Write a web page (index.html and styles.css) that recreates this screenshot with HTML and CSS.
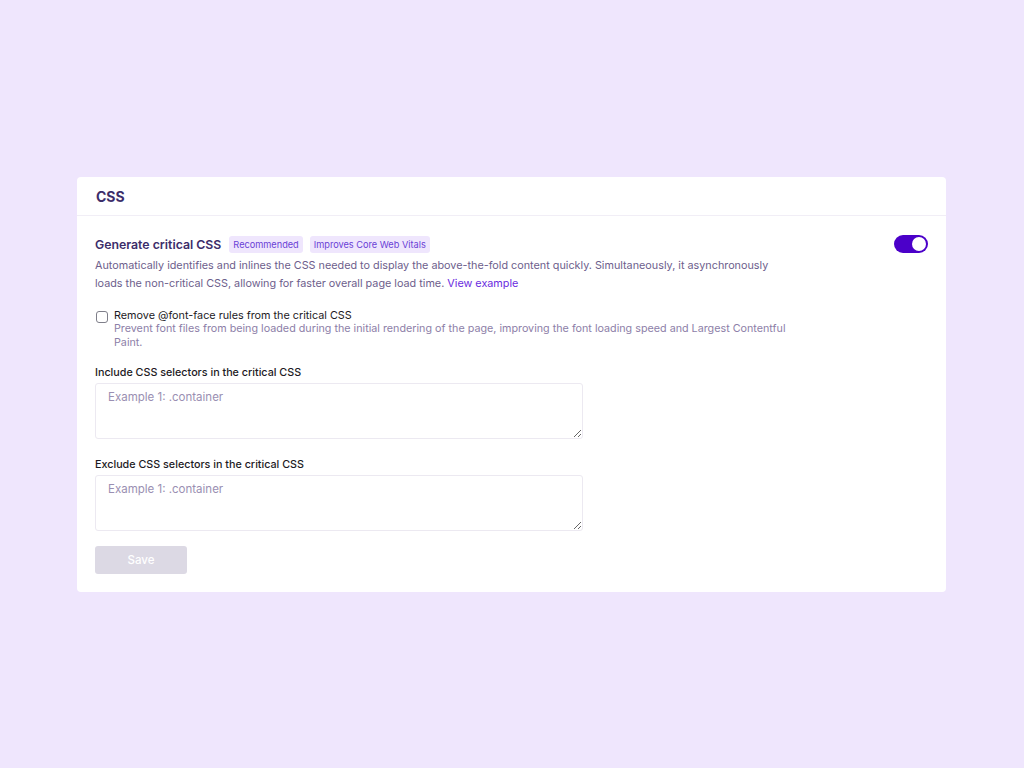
FILE: index.html
```html
<!DOCTYPE html>
<html lang="en">
<head>
<meta charset="utf-8">
<title>CSS settings</title>
<link rel="stylesheet" href="styles.css">
</head>
<body>
<div class="page">
  <section class="card">
    <header class="card-head">
      <h2 class="card-title">CSS</h2>
    </header>
    <div class="card-body">
      <div class="setting">
        <div class="setting-text">
          <div class="setting-title-row">
            <h3 class="setting-title">Generate critical CSS</h3>
            <span class="badge">Recommended</span>
            <span class="badge">Improves Core Web Vitals</span>
          </div>
          <p class="setting-desc">Automatically identifies and inlines the CSS needed to display the above-the-fold content quickly. Simultaneously, it asynchronously loads the non-critical CSS, allowing for faster overall page load time. <a class="link" href="#">View example</a></p>
        </div>
        <label class="toggle"><span class="knob"></span></label>
      </div>

      <div class="check-row">
        <span class="checkbox"></span>
        <div class="check-text">
          <div class="check-label">Remove @font-face rules from the critical CSS</div>
          <div class="check-desc">Prevent font files from being loaded during the initial rendering of the page, improving the font loading speed and Largest Contentful Paint.</div>
        </div>
      </div>

      <div class="field">
        <div class="field-label">Include CSS selectors in the critical CSS</div>
        <textarea class="textarea" placeholder="Example 1: .container"></textarea>
      </div>

      <div class="field">
        <div class="field-label">Exclude CSS selectors in the critical CSS</div>
        <textarea class="textarea" placeholder="Example 1: .container"></textarea>
      </div>

      <button class="save" type="button">Save</button>
    </div>
  </section>
</div>
</body>
</html>
```
FILE: styles.css
```css
* { box-sizing: border-box; }
html, body { margin: 0; padding: 0; }
body {
  background: #efe6fd;
  font-family: Inter, "Liberation Sans", sans-serif;
  width: 1024px;
  height: 768px;
}
.page {
  height: 768px;
  display: flex;
  align-items: flex-start;
  justify-content: center;
  padding: 177px 1px 0 0;
}
.card {
  width: 869px;
  background: #ffffff;
  border-radius: 4px;
}
.card-head {
  height: 39px;
  border-bottom: 1px solid #f1eef6;
  padding: 0 19px;
  display: flex;
  align-items: center;
}
.card-title {
  margin: 0;
  font-size: 14px;
  font-weight: 700;
  color: #3c2d6a;
}
.card-body {
  padding: 19px 18px 18px 18px;
}
.setting {
  display: flex;
  justify-content: space-between;
  align-items: flex-start;
}
.setting-text { max-width: 700px; }
.setting-title-row {
  display: flex;
  align-items: center;
  gap: 7px;
  height: 18px;
}
.setting-title {
  margin: 0 1px 0 0;
  font-size: 12.3px;
  font-weight: 600;
  color: #3c2d6a;
}
.badge {
  font-size: 9.2px;
  color: #6a3fd6;
  background: #efe6fd;
  border-radius: 3px;
  padding: 3px 4px;
  line-height: 11px;
}
.setting-desc {
  margin: 4px 0 0;
  font-size: 10.8px;
  line-height: 18px;
  color: #6d5e8c;
}
.link { color: #6a2be0; text-decoration: none; }
.toggle {
  flex: none;
  width: 34px;
  height: 18px;
  border-radius: 9px;
  background: #4b00c9;
  margin-top: 0;
  position: relative;
}
.knob {
  position: absolute;
  right: 2px;
  top: 2px;
  width: 14px;
  height: 14px;
  border-radius: 50%;
  background: #fff;
}
.check-row {
  margin-top: 16px;
  display: flex;
  gap: 6px;
  align-items: flex-start;
}
.checkbox {
  flex: none;
  width: 12px;
  height: 12px;
  border: 1px solid #7f7f8a;
  border-radius: 3px;
  margin-top: 2px;
  margin-left: 1px;
  background: #fff;
}
.check-text { max-width: 690px; }
.check-label {
  font-size: 10.8px;
  line-height: 13px;
  color: #1d1a24;
}
.check-desc {
  font-size: 10.75px;
  line-height: 13.5px;
  color: #8d80a8;
}
.field { margin-top: 17px; }
.field + .field { margin-top: 19px; }
.field-label {
  font-size: 10.75px;
  font-weight: 500;
  color: #1d1a24;
  line-height: 14px;
  margin-bottom: 3px;
}
.textarea {
  display: block;
  width: 488px;
  height: 56px;
  border: 1px solid #ece9f1;
  border-radius: 3px;
  padding: 6px 12px;
  font-family: Inter, "Liberation Sans", sans-serif;
  font-size: 11.5px;
  resize: vertical;
  outline: none;
}
.textarea::placeholder { color: #9a8fb2; }
.save {
  margin-top: 15px;
  width: 92px;
  height: 28px;
  border: none;
  border-radius: 3px;
  background: #dcd9e4;
  color: #ffffff;
  font-family: Inter, "Liberation Sans", sans-serif;
  font-size: 11.5px;
  font-weight: 500;
}
```
